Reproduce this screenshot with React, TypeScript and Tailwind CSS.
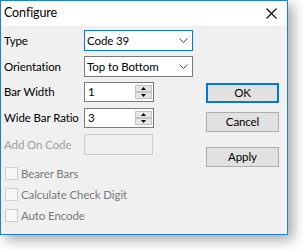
import React from 'react';

const font = { fontFamily: '"Segoe UI", Lato, "Noto Sans", sans-serif' };

const Chevron: React.FC = () => (
    <svg width="9" height="5" viewBox="0 0 9 5" className="shrink-0">
        <path d="M0.5 0.5 L4.5 4.5 L8.5 0.5" fill="none" stroke="#555" strokeWidth="1" />
    </svg>
);

const Combo: React.FC<{ value: string; focused?: boolean }> = ({ value, focused }) => (
    <div
        className={`w-[109px] h-[21px] bg-white border flex items-center justify-between pl-[2px] pr-[4px] ${
            focused ? 'border-[#0078d7]' : 'border-[#7a7a7a]'
        }`}
    >
        <span className="text-black whitespace-nowrap">{value}</span>
        <Chevron />
    </div>
);

const Arrow: React.FC<{ up?: boolean }> = ({ up }) => (
    <div className="h-[7px] w-[17px] bg-[#e6e6e6] border border-[#c4c4c4] flex items-center justify-center">
        <svg width="5" height="3" viewBox="0 0 5 3">
            <path d={up ? 'M0 3 L2.5 0 L5 3 Z' : 'M0 0 L2.5 3 L5 0 Z'} fill="#000" />
        </svg>
    </div>
);

const Spinner: React.FC<{ value: string }> = ({ value }) => (
    <div className="w-[70px] h-[20px] bg-white border border-[#7a7a7a] flex items-center justify-between pl-[3px] pr-[1px]">
        <span className="text-black">{value}</span>
        <div className="flex flex-col">
            <Arrow up />
            <Arrow />
        </div>
    </div>
);

const Check: React.FC<{ label: string }> = ({ label }) => (
    <div className="h-[21px] flex items-center gap-[3px] pl-[1px]">
        <div className="w-[13px] h-[13px] border border-[#cccccc] bg-[#f7f7f7]" />
        <span className="text-[#7a7a7a] whitespace-nowrap">{label}</span>
    </div>
);

const Button: React.FC<{ label: string; primary?: boolean }> = ({ label, primary }) => (
    <div
        className={`w-[73px] h-[20px] bg-[#e1e1e1] flex items-center justify-center text-black ${
            primary ? 'border-2 border-[#0078d7]' : 'border border-[#adadad]'
        }`}
    >
        {label}
    </div>
);

const Label: React.FC<{ text: string; muted?: boolean }> = ({ text, muted }) => (
    <span className={`w-[80px] shrink-0 whitespace-nowrap ${muted ? 'text-[#a0a0a0]' : 'text-black'}`}>{text}</span>
);

const App: React.FC = () => {
    return (
        <div className="w-[303px] h-[250px] bg-white text-[11.5px] tracking-[-0.1px] leading-none" style={font}>
            <div className="w-[288px] h-[235px] border border-[#1883d7] bg-[#f0f0f0] shadow-[5px_5px_12px_rgba(0,0,0,0.35)] flex flex-col">
                <div className="h-[25px] bg-white flex items-center justify-between pl-[3px] pr-[10px]">
                    <span className="text-black text-[12.5px]">Configure</span>
                    <svg width="11" height="11" viewBox="0 0 11 11">
                        <path d="M0.5 0.5 L10.5 10.5 M10.5 0.5 L0.5 10.5" stroke="#000" strokeWidth="1.1" />
                    </svg>
                </div>
                <div className="flex">
                    <div className="w-[205px] pl-[3px] pt-[4px] flex flex-col">
                        <div className="flex items-center h-[21px]">
                            <Label text="Type" />
                            <Combo value="Code 39" focused />
                        </div>
                        <div className="flex items-center h-[21px] mt-[5px]">
                            <Label text="Orientation" />
                            <Combo value="Top to Bottom" />
                        </div>
                        <div className="flex items-center h-[20px] mt-[5px]">
                            <Label text="Bar Width" />
                            <Spinner value="1" />
                        </div>
                        <div className="flex items-center h-[20px] mt-[6px]">
                            <Label text="Wide Bar Ratio" />
                            <Spinner value="3" />
                        </div>
                        <div className="flex items-center h-[21px] mt-[6px]">
                            <Label text="Add On Code" muted />
                            <div className="w-[69px] h-[21px] border border-[#cccccc] bg-[#f0f0f0]" />
                        </div>
                        <div className="flex flex-col mt-[8px]">
                            <Check label="Bearer Bars" />
                            <Check label="Calculate Check Digit" />
                            <Check label="Auto Encode" />
                        </div>
                    </div>
                    <div className="pt-[57px] flex flex-col">
                        <Button label="OK" primary />
                        <div className="mt-[9px]">
                            <Button label="Cancel" />
                        </div>
                        <div className="mt-[15px]">
                            <Button label="Apply" />
                        </div>
                    </div>
                </div>
            </div>
        </div>
    );
};

export default App;
